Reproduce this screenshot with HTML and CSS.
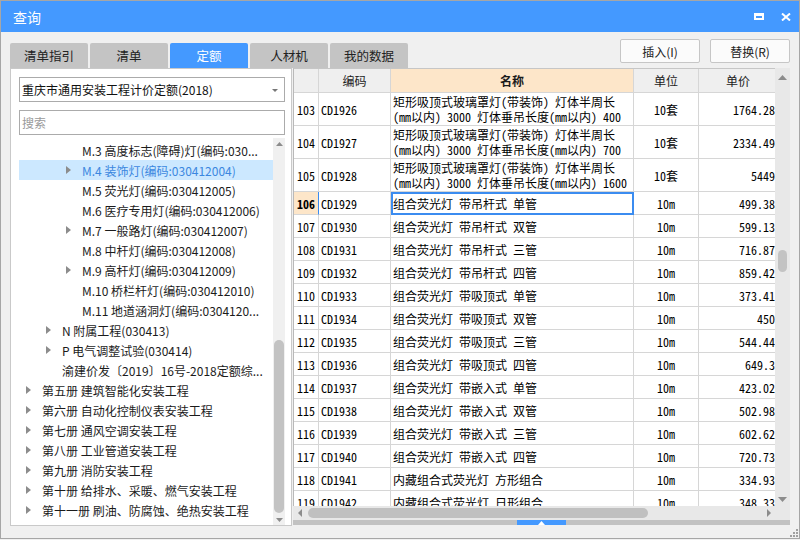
FILE: index.html
```html
<!DOCTYPE html>
<html lang="zh-CN">
<head>
<meta charset="utf-8">
<title>查询</title>
<link rel="stylesheet" href="styles.css">
</head>
<body>
<div class="window">
  <div class="titlebar">
    <span class="title">查询</span>
    <div class="winbtns">
      <svg class="ico-max" width="10" height="7" viewBox="0 0 10 7"><path d="M0 0H10V7H0Z M2 3V5H8V3Z" fill="#fff" fill-rule="evenodd"/></svg>
      <svg class="ico-close" width="10" height="8" viewBox="0 0 10 8"><path d="M1 0.5L9 7.5M9 0.5L1 7.5" stroke="#fff" stroke-width="2"/></svg>
    </div>
  </div>

  <div class="toolbar">
    <div class="tabs">
      <div class="tab">清单指引</div>
      <div class="tab">清单</div>
      <div class="tab active">定额</div>
      <div class="tab">人材机</div>
      <div class="tab">我的数据</div>
    </div>
    <div class="actions">
      <button class="btn">插入(I)</button>
      <button class="btn">替换(R)</button>
    </div>
  </div>

  <div class="main">
    <div class="left">
      <div class="select">
        <span class="select-text">重庆市通用安装工程计价定额(2018)</span>
        <svg width="6" height="3" viewBox="0 0 6 3"><path d="M0 0H6L3 3Z" fill="#777"/></svg>
      </div>
      <div class="search">搜索</div>
      <div class="tree">
        <div class="tree-list">
          <div class="node l2"><span class="caret"></span><span class="label">M.3 高度标志(障碍)灯(编码:030...</span></div>
          <div class="node l2 sel"><span class="caret"><svg width="5" height="8" viewBox="0 0 5 8"><path d="M0 0L5 4L0 8Z" fill="#8c8c8c"/></svg></span><span class="label">M.4 装饰灯(编码:030412004)</span></div>
          <div class="node l2"><span class="caret"></span><span class="label">M.5 荧光灯(编码:030412005)</span></div>
          <div class="node l2"><span class="caret"></span><span class="label">M.6 医疗专用灯(编码:030412006)</span></div>
          <div class="node l2"><span class="caret"><svg width="5" height="8" viewBox="0 0 5 8"><path d="M0 0L5 4L0 8Z" fill="#8c8c8c"/></svg></span><span class="label">M.7 一般路灯(编码:030412007)</span></div>
          <div class="node l2"><span class="caret"></span><span class="label">M.8 中杆灯(编码:030412008)</span></div>
          <div class="node l2"><span class="caret"><svg width="5" height="8" viewBox="0 0 5 8"><path d="M0 0L5 4L0 8Z" fill="#8c8c8c"/></svg></span><span class="label">M.9 高杆灯(编码:030412009)</span></div>
          <div class="node l2"><span class="caret"></span><span class="label">M.10 桥栏杆灯(编码:030412010)</span></div>
          <div class="node l2"><span class="caret"></span><span class="label">M.11 地道涵洞灯(编码:0304120...</span></div>
          <div class="node l1"><span class="caret"><svg width="5" height="8" viewBox="0 0 5 8"><path d="M0 0L5 4L0 8Z" fill="#8c8c8c"/></svg></span><span class="label">N 附属工程(030413)</span></div>
          <div class="node l1"><span class="caret"><svg width="5" height="8" viewBox="0 0 5 8"><path d="M0 0L5 4L0 8Z" fill="#8c8c8c"/></svg></span><span class="label">P 电气调整试验(030414)</span></div>
          <div class="node l1"><span class="caret"></span><span class="label">渝建价发〔2019〕16号-2018定额综...</span></div>
          <div class="node l0"><span class="caret"><svg width="5" height="8" viewBox="0 0 5 8"><path d="M0 0L5 4L0 8Z" fill="#8c8c8c"/></svg></span><span class="label">第五册 建筑智能化安装工程</span></div>
          <div class="node l0"><span class="caret"><svg width="5" height="8" viewBox="0 0 5 8"><path d="M0 0L5 4L0 8Z" fill="#8c8c8c"/></svg></span><span class="label">第六册 自动化控制仪表安装工程</span></div>
          <div class="node l0"><span class="caret"><svg width="5" height="8" viewBox="0 0 5 8"><path d="M0 0L5 4L0 8Z" fill="#8c8c8c"/></svg></span><span class="label">第七册 通风空调安装工程</span></div>
          <div class="node l0"><span class="caret"><svg width="5" height="8" viewBox="0 0 5 8"><path d="M0 0L5 4L0 8Z" fill="#8c8c8c"/></svg></span><span class="label">第八册 工业管道安装工程</span></div>
          <div class="node l0"><span class="caret"><svg width="5" height="8" viewBox="0 0 5 8"><path d="M0 0L5 4L0 8Z" fill="#8c8c8c"/></svg></span><span class="label">第九册 消防安装工程</span></div>
          <div class="node l0"><span class="caret"><svg width="5" height="8" viewBox="0 0 5 8"><path d="M0 0L5 4L0 8Z" fill="#8c8c8c"/></svg></span><span class="label">第十册 给排水、采暖、燃气安装工程</span></div>
          <div class="node l0"><span class="caret"><svg width="5" height="8" viewBox="0 0 5 8"><path d="M0 0L5 4L0 8Z" fill="#8c8c8c"/></svg></span><span class="label">第十一册 刷油、防腐蚀、绝热安装工程</span></div>
        </div>
        <div class="tscroll">
          <svg width="7" height="4" viewBox="0 0 7 4"><path d="M0 4L3.5 0L7 4Z" fill="#8c8c8c"/></svg>
          <div class="spacer"></div>
          <div class="tthumb"></div>
          <svg width="7" height="4" viewBox="0 0 7 4"><path d="M0 0L3.5 4L7 0Z" fill="#8c8c8c"/></svg>
        </div>
      </div>
    </div>

    <div class="grid">
      <div class="grid-top">
        <div class="viewport">
          <div class="hrow row">
            <div class="c c-no"></div><div class="c c-code">编码</div><div class="c c-name h-name">名称</div><div class="c c-unit">单位</div><div class="c c-price">单价</div>
          </div>
          <div class="row tall"><div class="c c-no">103</div><div class="c c-code">CD1926</div><div class="c c-name"><div class="ln">矩形吸顶式玻璃罩灯(带装饰) 灯体半周长</div><div class="ln">(mm以内) 3000 灯体垂吊长度(mm以内) 400</div></div><div class="c c-unit">10套</div><div class="c c-price">1764.28</div></div>
          <div class="row tall"><div class="c c-no">104</div><div class="c c-code">CD1927</div><div class="c c-name"><div class="ln">矩形吸顶式玻璃罩灯(带装饰) 灯体半周长</div><div class="ln">(mm以内) 3000 灯体垂吊长度(mm以内) 700</div></div><div class="c c-unit">10套</div><div class="c c-price">2334.49</div></div>
          <div class="row tall"><div class="c c-no">105</div><div class="c c-code">CD1928</div><div class="c c-name"><div class="ln">矩形吸顶式玻璃罩灯(带装饰) 灯体半周长</div><div class="ln">(mm以内) 3000 灯体垂吊长度(mm以内) 1600</div></div><div class="c c-unit">10套</div><div class="c c-price">5449</div></div>
          <div class="row cur"><div class="c c-no">106</div><div class="c c-code">CD1929</div><div class="c c-name focus">组合荧光灯 带吊杆式 单管</div><div class="c c-unit">10m</div><div class="c c-price">499.38</div></div>
          <div class="row"><div class="c c-no">107</div><div class="c c-code">CD1930</div><div class="c c-name">组合荧光灯 带吊杆式 双管</div><div class="c c-unit">10m</div><div class="c c-price">599.13</div></div>
          <div class="row"><div class="c c-no">108</div><div class="c c-code">CD1931</div><div class="c c-name">组合荧光灯 带吊杆式 三管</div><div class="c c-unit">10m</div><div class="c c-price">716.87</div></div>
          <div class="row"><div class="c c-no">109</div><div class="c c-code">CD1932</div><div class="c c-name">组合荧光灯 带吊杆式 四管</div><div class="c c-unit">10m</div><div class="c c-price">859.42</div></div>
          <div class="row"><div class="c c-no">110</div><div class="c c-code">CD1933</div><div class="c c-name">组合荧光灯 带吸顶式 单管</div><div class="c c-unit">10m</div><div class="c c-price">373.41</div></div>
          <div class="row"><div class="c c-no">111</div><div class="c c-code">CD1934</div><div class="c c-name">组合荧光灯 带吸顶式 双管</div><div class="c c-unit">10m</div><div class="c c-price">450</div></div>
          <div class="row"><div class="c c-no">112</div><div class="c c-code">CD1935</div><div class="c c-name">组合荧光灯 带吸顶式 三管</div><div class="c c-unit">10m</div><div class="c c-price">544.44</div></div>
          <div class="row"><div class="c c-no">113</div><div class="c c-code">CD1936</div><div class="c c-name">组合荧光灯 带吸顶式 四管</div><div class="c c-unit">10m</div><div class="c c-price">649.3</div></div>
          <div class="row"><div class="c c-no">114</div><div class="c c-code">CD1937</div><div class="c c-name">组合荧光灯 带嵌入式 单管</div><div class="c c-unit">10m</div><div class="c c-price">423.02</div></div>
          <div class="row"><div class="c c-no">115</div><div class="c c-code">CD1938</div><div class="c c-name">组合荧光灯 带嵌入式 双管</div><div class="c c-unit">10m</div><div class="c c-price">502.98</div></div>
          <div class="row"><div class="c c-no">116</div><div class="c c-code">CD1939</div><div class="c c-name">组合荧光灯 带嵌入式 三管</div><div class="c c-unit">10m</div><div class="c c-price">602.62</div></div>
          <div class="row"><div class="c c-no">117</div><div class="c c-code">CD1940</div><div class="c c-name">组合荧光灯 带嵌入式 四管</div><div class="c c-unit">10m</div><div class="c c-price">720.73</div></div>
          <div class="row"><div class="c c-no">118</div><div class="c c-code">CD1941</div><div class="c c-name">内藏组合式荧光灯 方形组合</div><div class="c c-unit">10m</div><div class="c c-price">334.93</div></div>
          <div class="row"><div class="c c-no">119</div><div class="c c-code">CD1942</div><div class="c c-name">内藏组合式荧光灯 日形组合</div><div class="c c-unit">10m</div><div class="c c-price">348.33</div></div>
        </div>
        <div class="vbar">
          <svg width="9" height="5" viewBox="0 0 9 5"><path d="M0 5L4.5 0L9 5Z" fill="#8c8c8c"/></svg>
          <div class="vthumb"></div>
          <div class="spacer"></div>
          <svg width="9" height="5" viewBox="0 0 9 5"><path d="M0 0L4.5 5L9 0Z" fill="#8c8c8c"/></svg>
        </div>
      </div>
      <div class="grid-bottom">
        <div class="hbar">
          <svg width="4" height="8" viewBox="0 0 4 8"><path d="M4 0L0 4L4 8Z" fill="#8c8c8c"/></svg>
          <div class="hthumb"></div>
          <div class="spacer"></div>
          <svg width="4" height="8" viewBox="0 0 4 8"><path d="M0 0L4 4L0 8Z" fill="#8c8c8c"/></svg>
        </div>
        <div class="corner"></div>
      </div>
      <div class="splitter">
        <div class="grip"><svg width="7" height="4" viewBox="0 0 7 4"><path d="M0 4L3.5 0L7 4Z" fill="#fff"/></svg></div>
      </div>
    </div>
  </div>

  <svg class="resize" width="9" height="9" viewBox="0 0 9 9">
    <rect x="7" y="1" width="2" height="2" fill="#a0a0a0"/>
    <rect x="4" y="4" width="2" height="2" fill="#a0a0a0"/>
    <rect x="7" y="4" width="2" height="2" fill="#a0a0a0"/>
    <rect x="1" y="7" width="2" height="2" fill="#a0a0a0"/>
    <rect x="4" y="7" width="2" height="2" fill="#a0a0a0"/>
    <rect x="7" y="7" width="2" height="2" fill="#a0a0a0"/>
  </svg>
</div>
</body>
</html>
```

FILE: styles.css
```css
* { box-sizing: border-box; }
html, body { margin: 0; padding: 0; }
body {
  width: 800px;
  height: 540px;
  overflow: hidden;
  background: #f0f0f0;
  font-family: "Noto Sans CJK SC", "Microsoft YaHei", sans-serif;
  font-size: 12px;
  color: #1b1b1b;
}

.window {
  position: relative;
  width: 800px;
  height: 539px;
  border: 1px solid #a6a6a6;
  background: #f0f0f0;
  display: flex;
  flex-direction: column;
}

/* title bar */
.titlebar {
  height: 31px;
  flex: none;
  background: #4499ff;
  color: #fff;
  display: flex;
  align-items: center;
  padding: 0 8px 0 12px;
}
.title { flex: 1; font-size: 14px; line-height: 1; }
.winbtns { display: flex; align-items: center; gap: 17px; }
.winbtns svg { display: block; }

/* toolbar */
.toolbar {
  height: 36px;
  flex: none;
  display: flex;
  justify-content: space-between;
  padding: 0 9px;
}
.tabs { display: flex; gap: 2px; align-self: flex-end; }
.tab {
  width: 78px;
  height: 25px;
  background: #c4c4c4;
  border-radius: 2px 2px 0 0;
  display: flex;
  align-items: center;
  justify-content: center;
  color: #222;
  font-size: 12.5px;
}
.tab.active { background: #4499ff; color: #fff; }
.actions { display: flex; gap: 10px; padding-top: 7px; }
.btn {
  width: 80px;
  height: 24px;
  background: #fbfbfb;
  border: 1px solid #c6c6c6;
  border-radius: 2px;
  font-family: inherit;
  font-size: 12px;
  color: #222;
  padding: 0;
}

/* main area */
.main {
  height: 458px;
  flex: none;
  display: flex;
  gap: 1px;
  padding: 0 9px;
}

.left {
  width: 282px;
  background: #fff;
  border: 1px solid #c9c9c9;
  padding: 8px 6px 0 8px;
  display: flex;
  flex-direction: column;
}
.select {
  height: 25px;
  border: 1px solid #ababab;
  display: flex;
  align-items: center;
  justify-content: space-between;
  padding: 0 6px 0 2px;
  color: #111;
}
.select svg { display: block; margin-top: 1px; }
.search {
  height: 25px;
  margin-top: 8px;
  border: 1px solid #ababab;
  display: flex;
  align-items: center;
  padding-left: 2px;
  color: #9a9a9a;
}
.tree {
  flex: 1;
  margin-top: 3px;
  display: flex;
  min-height: 0;
}
.tree-list {
  flex: 1;
  padding-top: 2px;
  overflow: hidden;
}
.node {
  height: 20px;
  display: flex;
  align-items: center;
  white-space: nowrap;
  color: #1b1b1b;
}
.node.l0 { padding-left: 7px; }
.node.l1 { padding-left: 27px; }
.node.l2 { padding-left: 47px; }
.caret { width: 16px; flex: none; display: flex; align-items: center; }
.caret svg { display: block; }
.label { overflow: hidden; }
.node.sel { background: #cce8ff; color: #3b87e0; }

.tscroll {
  width: 12px;
  background: #f0f0f0;
  display: flex;
  flex-direction: column;
  align-items: center;
  padding: 4px 0 3px;
}
.tscroll svg { display: block; flex: none; }
.spacer { flex: 1; }
.tthumb {
  width: 10px;
  height: 173px;
  background: #c3c3c3;
  border-radius: 5px;
  margin-bottom: 5px;
}

/* grid */
.grid {
  width: 497px;
  display: flex;
  flex-direction: column;
}
.grid-top { height: 438px; display: flex; }
.viewport {
  flex: 1;
  min-width: 0;
  overflow: hidden;
  background: #fff;
  border-left: 1px solid #b9b9b9;
  border-top: 1px solid #c6c6c6;
  font-family: "Noto Sans Mono CJK SC", "Noto Sans CJK SC", monospace;
  font-size: 12px;
  color: #000;
}
.row {
  display: grid;
  grid-template-columns: 25px 72px 243px 65px 80px;
  width: 485px;
  height: 23px;
  flex: none;
}
.row.tall { height: 33px; }
.row.hrow { height: 24px; }
.c {
  border-right: 1px solid #d6d6d6;
  border-bottom: 1px solid #d6d6d6;
  padding: 0 2px;
  white-space: nowrap;
  overflow: hidden;
  display: flex;
  align-items: center;
  line-height: 15px;
}
.c-no { padding-left: 3px; }
.c-unit { justify-content: center; }
.c-price { justify-content: flex-end; padding-right: 3px; }
.row.tall .c-name { flex-direction: column; align-items: flex-start; justify-content: center; }
.ln { height: 15px; line-height: 15px; }

.hrow .c {
  font-family: "Noto Sans CJK SC", sans-serif;
  background: #efefef;
  color: #1b1b1b;
  justify-content: center;
}
.hrow .h-name { background: #fde6c9; font-weight: bold; }

.row.cur .c-no {
  background: #fde6c9;
  font-weight: bold;
  border-right-color: #3b8cf0;
}
.focus { outline: 2px solid #3b8cf0; outline-offset: -2px; }

.vbar {
  width: 15px;
  flex: none;
  background: #e8e8e8;
  display: flex;
  flex-direction: column;
  align-items: center;
  padding: 7px 0 4px;
}
.vbar svg { display: block; flex: none; }
.vthumb {
  width: 9px;
  height: 22px;
  margin-top: 170px;
  background: #c3c3c3;
  border-radius: 5px;
}

.grid-bottom { height: 14px; display: flex; }
.hbar {
  flex: 1;
  background: #e8e8e8;
  display: flex;
  align-items: center;
  padding: 0 4px 0 5px;
}
.hbar svg { display: block; flex: none; }
.hthumb {
  width: 340px;
  height: 10px;
  margin-left: 6px;
  background: #c0c0c0;
  border-radius: 5px;
}
.corner { width: 15px; background: #e8e8e8; }

.splitter {
  height: 5px;
  background: #c2c2c2;
  display: flex;
  justify-content: center;
}
.grip {
  width: 49px;
  height: 5px;
  background: #4499ff;
  display: flex;
  align-items: flex-end;
  justify-content: center;
}
.grip svg { display: block; }

.resize { position: absolute; right: 1px; bottom: 1px; display: block; }
```
